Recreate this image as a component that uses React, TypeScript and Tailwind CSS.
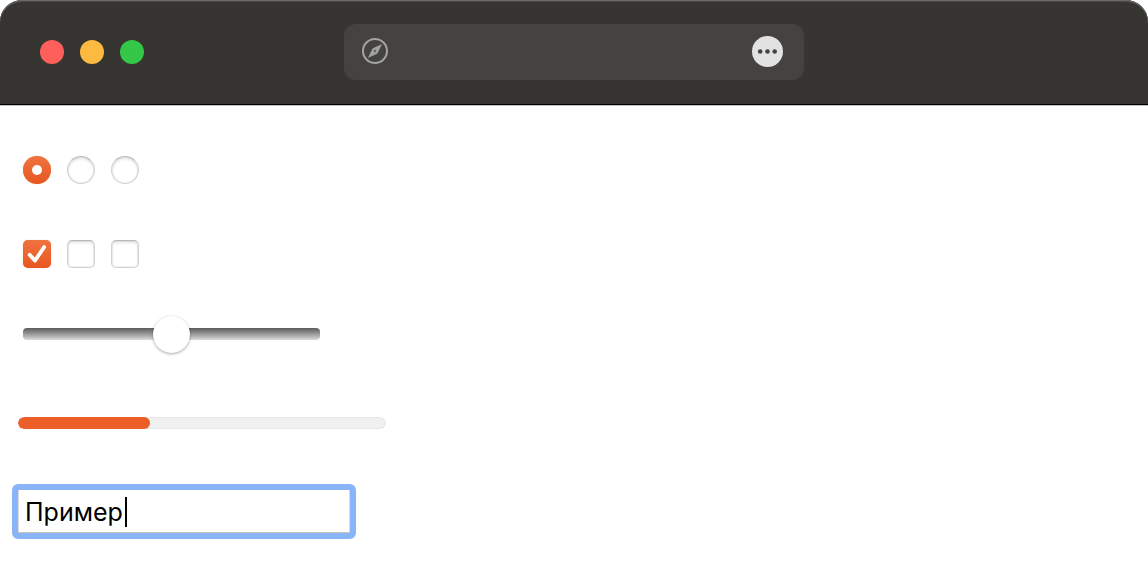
const boxBase =
  "m-0 block size-7 appearance-none border border-[#d2d2d2] border-t-[#b8b8b8] bg-white bg-center bg-no-repeat shadow-[inset_0_2px_3px_rgba(0,0,0,0.1),inset_0_0_1px_1px_rgba(0,0,0,0.06)] checked:border-0 checked:bg-linear-to-b checked:from-[#ef7340] checked:to-[#e8561e] checked:shadow-[0_0_1px_rgba(232,86,30,0.5)]";

const options = ["Первый", "Второй", "Третий"];

const CompassIcon = () => (
  <svg viewBox="0 0 26 26" className="size-[26px]" aria-hidden="true">
    <circle cx="13" cy="13" r="12" fill="none" stroke="#a3a3a1" strokeWidth="2" />
    <path
      fillRule="evenodd"
      fill="#a3a3a1"
      d="M19.6 6.6 10.8 10.6 6.4 19.4 15.2 15.4ZM13 11.7a1.3 1.3 0 1 1 0 2.6 1.3 1.3 0 0 1 0-2.6Z"
      stroke="#a3a3a1"
      strokeWidth="0.5"
      strokeLinejoin="round"
    />
  </svg>
);

const DotsIcon = () => (
  <svg viewBox="0 0 31 31" className="size-[31px]" aria-hidden="true">
    <circle cx="15.5" cy="15.5" r="15.5" fill="#e2e2e2" />
    <g fill="#444340">
      <circle cx="8.2" cy="15.5" r="2.3" />
      <circle cx="15.5" cy="15.5" r="2.3" />
      <circle cx="22.7" cy="15.5" r="2.3" />
    </g>
  </svg>
);

const TitleBar = () => (
  <header className="grid h-[105px] grid-cols-[1fr_minmax(0,460px)_1fr] items-center rounded-t-[22px] border-b border-black bg-[#363532] shadow-[inset_0_1px_0_#6b6a68,inset_0_2px_0_#4c4b49,0_1px_0_#c4c3c0]">
    <div className="flex gap-4 pl-10">
      <button type="button" aria-label="Закрыть" className="size-6 rounded-full bg-[#ff5f5b]" />
      <button type="button" aria-label="Свернуть" className="size-6 rounded-full bg-[#fdba41]" />
      <button type="button" aria-label="Развернуть" className="size-6 rounded-full bg-[#34c748]" />
    </div>
    <div className="flex h-14 items-center justify-between rounded-xl bg-[#444340] pr-[21px] pb-0.5 pl-[18px]">
      <CompassIcon />
      <button type="button" aria-label="Ещё" className="rounded-full">
        <DotsIcon />
      </button>
    </div>
  </header>
);

const App = () => (
  <div className="min-h-screen bg-white font-['Inter',sans-serif] text-black">
    <TitleBar />

    <main className="flex flex-col items-start px-3 pt-[51px] pb-10">
      {/* Radio buttons */}
      <div role="radiogroup" aria-label="Переключатели" className="flex gap-4 pl-[11px]">
        {options.map((name, i) => (
          <label key={name} className="relative block">
            <input
              type="radio"
              name="choice"
              aria-label={name}
              defaultChecked={i === 0}
              className={`peer rounded-full ${boxBase}`}
            />
            <span className="pointer-events-none absolute inset-0 m-auto hidden size-2.5 rounded-full bg-white peer-checked:block" />
          </label>
        ))}
      </div>

      {/* Checkboxes */}
      <div role="group" aria-label="Флажки" className="mt-14 flex gap-4 pl-[11px]">
        {options.map((name, i) => (
          <label key={name} className="relative block">
            <input
              type="checkbox"
              aria-label={name}
              defaultChecked={i === 0}
              className={`peer rounded-[5px] ${boxBase}`}
            />
            <svg
              viewBox="0 0 28 28"
              className="pointer-events-none absolute inset-0 hidden size-7 peer-checked:block"
              aria-hidden="true"
            >
              <path
                d="M6.6 14.8 12 20.6 21.2 7"
                fill="none"
                stroke="#fff"
                strokeWidth="3.8"
                strokeLinecap="round"
                strokeLinejoin="round"
              />
            </svg>
          </label>
        ))}
      </div>

      {/* Slider */}
      <div className="mt-[47px] pl-[11px]">
        <input
          type="range"
          aria-label="Ползунок"
          defaultValue={50}
          className="m-0 block h-[37px] w-[297px] appearance-none bg-transparent [&::-webkit-slider-runnable-track]:h-3 [&::-webkit-slider-runnable-track]:rounded-[4px] [&::-webkit-slider-runnable-track]:bg-linear-to-b [&::-webkit-slider-runnable-track]:from-[#5c5c5c] [&::-webkit-slider-runnable-track]:to-[#dcdcdc] [&::-webkit-slider-thumb]:-mt-3 [&::-webkit-slider-thumb]:size-[37px] [&::-webkit-slider-thumb]:appearance-none [&::-webkit-slider-thumb]:rounded-full [&::-webkit-slider-thumb]:bg-white [&::-webkit-slider-thumb]:shadow-[0_1px_3px_rgba(0,0,0,0.35)]"
        />
      </div>

      {/* Progress */}
      <div className="mt-[65px] pl-1.5">
        <progress
          aria-label="Прогресс"
          value={36}
          max={100}
          className="block h-3 w-[368px] appearance-none overflow-hidden rounded-full [&::-webkit-progress-bar]:rounded-full [&::-webkit-progress-bar]:bg-[#f0f0f0] [&::-webkit-progress-bar]:shadow-[inset_0_0_2px_rgba(0,0,0,0.12)] [&::-webkit-progress-value]:rounded-full [&::-webkit-progress-value]:bg-[#eb5e28]"
        />
      </div>

      {/* Text field */}
      <label className="relative mt-[55px] block">
        <input
          type="text"
          aria-label="Текст"
          defaultValue="Пример"
          className="block h-[55px] w-[344px] rounded-md border-[6px] border-[#89b4f7] bg-white px-[7px] text-[25px] leading-[30px] caret-transparent shadow-[inset_0_-1px_0_#c9c6bd,inset_1px_0_0_#dcdcdc,inset_-1px_0_0_#dcdcdc] outline-none"
        />
        <span className="pointer-events-none absolute top-[13px] left-[113px] h-[30px] w-0.5 bg-black" />
      </label>
    </main>
  </div>
);

export default App;
